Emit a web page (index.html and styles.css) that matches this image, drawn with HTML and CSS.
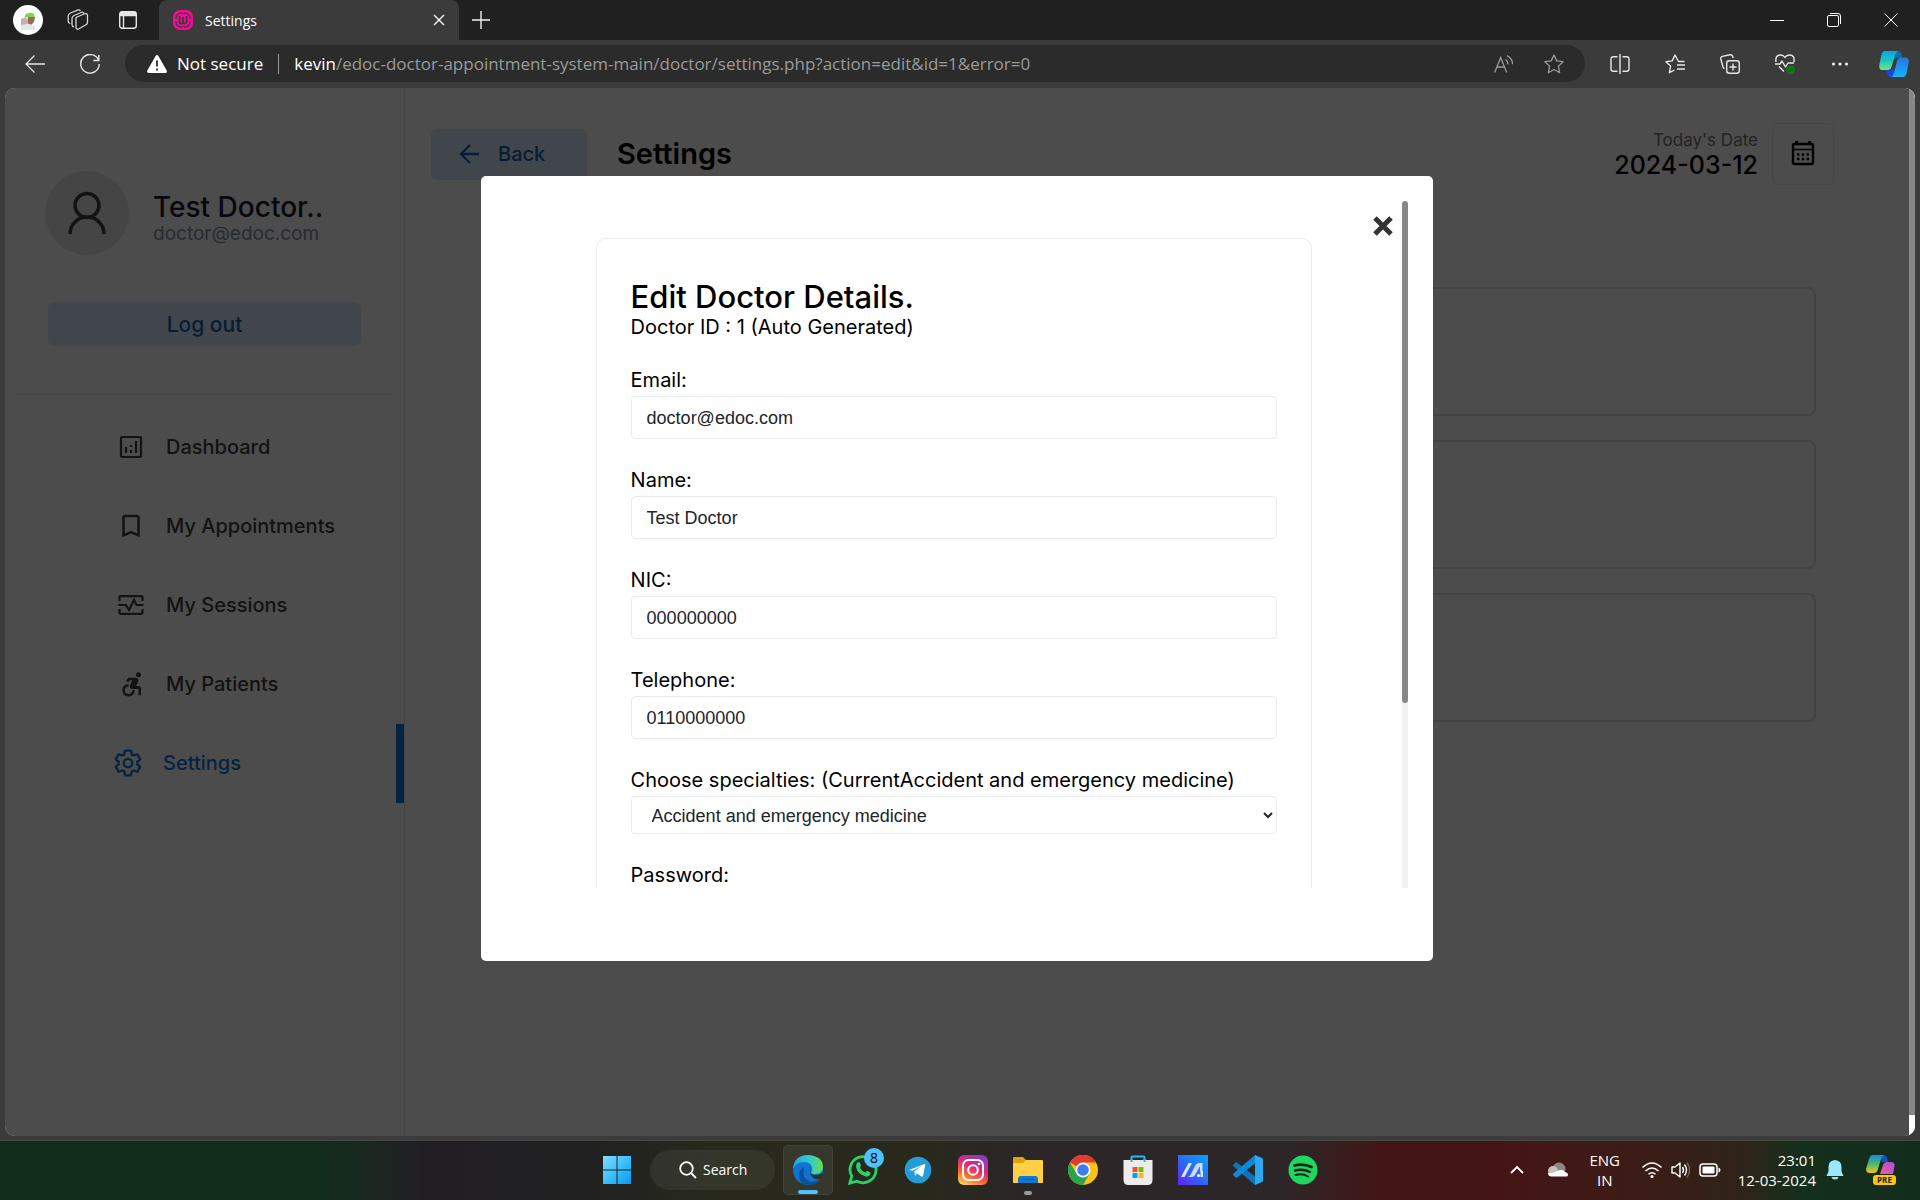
FILE: index.html
```html
<!DOCTYPE html>
<html lang="en">
<head>
<meta charset="utf-8">
<title>Settings</title>
<link rel="stylesheet" href="styles.css">
</head>
<body>
<header class="titlebar">
  <div class="titlebar-tools">
    <button class="ghost profile" aria-label="Profile"><svg width="30" height="30" viewBox="0 0 30 30"><circle cx="15" cy="15" r="15" fill="#fff"/><path d="M12 10q4-4 9-1l1 4-10-1z" fill="#7fd64a"/><path d="M15 12h7l-1 5-3 3-4-2z" fill="#9a6a58"/><path d="M8 14l5-2 2 5-1 4-6-1z" fill="#c9b3a8"/><path d="M8 20l7-1 7 2v4H8z" fill="#e3e6ea"/></svg></button>
    <button class="ghost" aria-label="Workspaces"><svg width="22" height="22" viewBox="0 0 22 22" fill="none" stroke="#d6d6d6" stroke-width="1.3" stroke-linejoin="round"><path d="M9 8.500l8-3.500q3.500-1 3.500 1.500v7q0 1.500-1.500 2.300l-7 4q-3 1-3-1.500z"/><path d="M17 4.500q-.5-2-3-1L7 6.500Q5 7.500 5 9.500v6q0 2 2 2.300M13.500 2q-1-1.600-3-.8L3.500 4Q1.200 5 1.200 7v5q0 2.200 2 2.600"/></svg></button>
    <button class="ghost" aria-label="Tab actions"><svg width="20" height="20" viewBox="0 0 20 20" fill="none" stroke="#e6e6e6" stroke-width="1.4"><rect x="1.700" y="1.700" width="16.600" height="16.600" rx="2.500"/><path d="M2 4h16" stroke-width="4.500"/><path d="M5.500 6v12"/></svg></button>
  </div>
  <div class="tab">
    <svg width="20" height="20" viewBox="0 0 20 20"><rect width="20" height="20" rx="7" fill="#f50a96"/><rect x="3" y="3" width="14" height="14" rx="5" fill="none" stroke="#3b3b3b" stroke-width="1.300"/><path d="M6.500 6v6q0 1.500 1.700 1.500T10 12V7v5q0 1.500 1.700 1.500T13.500 12V6" fill="none" stroke="#3b3b3b" stroke-width="1.800"/><path d="M0 10h4M16 10h4M10 0v3M10 17v3" stroke="#f50a96" stroke-width="2"/></svg>
    <span class="tab-title">Settings</span>
    <button class="ghost" aria-label="Close tab"><svg width="12" height="12" viewBox="0 0 12 12" stroke="#fff" stroke-width="1.400"><path d="M1 1l10 10M11 1L1 11"/></svg></button>
  </div>
  <button class="ghost new-tab" aria-label="New tab"><svg width="18" height="18" viewBox="0 0 18 18" stroke="#eee" stroke-width="1.400"><path d="M9 0v18M0 9h18"/></svg></button>
  <div class="window-controls">
    <button class="ghost" aria-label="Minimize"><svg width="14" height="14" viewBox="0 0 14 14" stroke="#fff"><path d="M0 7.500h14"/></svg></button>
    <button class="ghost" aria-label="Restore"><svg width="14" height="14" viewBox="0 0 14 14" fill="none" stroke="#fff"><rect x=".5" y="2.500" width="11" height="11" rx="1.500"/><path d="M3 .5h8q2.500 0 2.500 2.500v8"/></svg></button>
    <button class="ghost" aria-label="Close"><svg width="14" height="14" viewBox="0 0 14 14" stroke="#fff"><path d="M.5.500l13 13M13.500.500l-13 13"/></svg></button>
  </div>
</header>
<nav class="toolbar" aria-label="Browser toolbar">
  <div class="nav-buttons">
    <button class="ghost" aria-label="Back"><svg width="20" height="18" viewBox="0 0 20 18" fill="none" stroke="#e6e6e6" stroke-width="1.300"><path d="M20 9H1M9.500.500L1 9l8.500 8.500"/></svg></button>
    <button class="ghost" aria-label="Refresh"><svg width="20" height="20" viewBox="0 0 20 20" fill="none" stroke="#e6e6e6" stroke-width="1.400"><path d="M18.500 6A9.300 9.300 0 1 0 19.300 10M18.800 1v5.500h-5.500"/></svg></button>
  </div>
  <div class="address">
    <svg width="20" height="18" viewBox="0 0 20 18"><path d="M8.700.800q1.300-1.400 2.600 0l8.500 15q.3 2-1.300 2.200H1.500Q-.2 17.800.2 15.800z" fill="#fff"/><path d="M10 5.500v6M10 13.500v2" stroke="#2b2b2b" stroke-width="1.800"/></svg>
    <span class="not-secure">Not secure</span>
    <span class="address-divider"></span>
    <span class="url"><b>kevin</b>/edoc-doctor-appointment-system-main/doctor/settings.php?action=edit&amp;id=1&amp;error=0</span>
    <button class="ghost" aria-label="Read aloud"><svg width="20" height="18" viewBox="0 0 20 18" fill="none" stroke="#9a9a9a" stroke-width="1.300"><path d="M.7 17.500L6.700 2.500l6 15M2.800 12h7.700M11.500 4.500q2.500 1.500 2.500 5M13 .7q5.500 2.800 5.500 8.500"/></svg></button>
    <button class="ghost" aria-label="Add to favorites"><svg width="20" height="20" viewBox="0 0 20 20" fill="none" stroke="#9a9a9a" stroke-width="1.300" stroke-linejoin="round"><path d="M10 1l2.800 5.900 6.300.8-4.700 4.400 1.200 6.600L10 15.500l-5.600 3.200 1.200-6.600L.9 7.700l6.300-.8z"/></svg></button>
  </div>
  <div class="toolbar-actions">
    <button class="ghost" aria-label="Split screen"><svg width="20" height="20" viewBox="0 0 20 20" fill="none" stroke="#e6e6e6" stroke-width="1.400"><path d="M7.500 2.700h-4Q1 2.700 1 5v10q0 2.300 2.500 2.300h4M12.500 2.700h4Q19 2.700 19 5v10q0 2.300-2.500 2.300h-4M10 0v20"/></svg></button>
    <button class="ghost" aria-label="Favorites"><svg width="20" height="20" viewBox="0 0 20 20" fill="none" stroke="#e6e6e6" stroke-width="1.400" stroke-linejoin="round"><path d="M19.500 7.500h-6L10 1 7.200 6.900.9 7.700l4.700 4.400-1.200 6.600L9.500 16M12 11h8M12 15h8"/></svg></button>
    <button class="ghost" aria-label="Collections"><svg width="20" height="20" viewBox="0 0 20 20" fill="none" stroke="#e6e6e6" stroke-width="1.400" stroke-linejoin="round"><rect x="6.700" y="6.700" width="12.600" height="12.600" rx="2.500"/><path d="M13 9.500v7M9.500 13h7M4.500 14.500Q3.500 14.500 3 13L.8 5Q.4 3 2.300 2.400L10 .8q2-.4 2.700 1.500l.6 1.700"/></svg></button>
    <button class="ghost" aria-label="Browser essentials"><svg width="20" height="20" viewBox="0 0 20 20" fill="none" stroke="#e6e6e6" stroke-width="1.400" stroke-linejoin="round"><path d="M1 8Q0 1 5.500 1 8.500 1 10 3.500 11.500 1 14.500 1 20 1 19 8M0 10h5l2-3 3.500 6 2.500-4h6M4 12.500l5 5"/><circle cx="15.500" cy="16" r="4.300" fill="#107c10" stroke="none"/><path d="M13.500 16l1.500 1.500 2.700-2.700" stroke="#063b06" stroke-width="1"/></svg></button>
    <button class="ghost" aria-label="More"><svg width="20" height="20" viewBox="0 0 20 20" fill="#fff"><circle cx="3.500" cy="10" r="1.500"/><circle cx="10" cy="10" r="1.500"/><circle cx="16.500" cy="10" r="1.500"/></svg></button>
    <button class="ghost copilot" aria-label="Copilot"><svg width="30" height="28" viewBox="0 0 30 28"><defs><linearGradient id="cpA" x1="0" y1="0" x2="0" y2="1"><stop offset="0" stop-color="#08a5e8"/><stop offset=".5" stop-color="#1cc4c0"/><stop offset="1" stop-color="#7be08a"/></linearGradient><linearGradient id="cpB" x1="0" y1="0" x2="0" y2="1"><stop offset="0" stop-color="#2a72e0"/><stop offset="1" stop-color="#16b4fb"/></linearGradient></defs><path d="M15 1h4q2.500 0 3.500 3l1 4h-5q-3 0-4 3z" fill="#0b6fa8"/><path d="M15 27h-4q-2.500 0-3-3l-1-4h5q3 0 4-3z" fill="#1c46d8"/><path d="M6 1h13q-2 1-3 4l-3.500 12Q11.500 20 9 20H4q-4.500 0-3.700-5L2.500 4.500Q3.500 1 6 1z" fill="url(#cpA)"/><path d="M24 27H12q2-1 3-4l3-12q1-3.500 4-3.500h4q4.500 0 3.700 5L27.500 23.500Q26.500 27 24 27z" fill="url(#cpB)"/></svg></button>
  </div>
</nav>

<main class="viewport">
  <div class="page">
    <aside class="sidebar">
      <div class="user">
        <div class="avatar"><svg width="38" height="44" viewBox="0 0 38 44" fill="none" stroke="#404040" stroke-width="3.500"><circle cx="19" cy="14.500" r="12"/><path d="M2 43a17 17 0 0 1 34 0"/></svg></div>
        <div class="user-text"><div class="user-name">Test Doctor..</div><div class="user-mail">doctor@edoc.com</div></div>
      </div>
      <button class="soft logout">Log out</button>
      <hr class="rule">
      <nav class="menu">
        <a href="#"><svg width="30" height="30" viewBox="0 0 30 30" fill="none" stroke="currentColor"><rect x="5" y="5" width="20" height="20" rx="1" stroke-width="2.200"/><path d="M10 15v6M15 18v3M15 13v2M20 9v12" stroke-width="2.200"/></svg>Dashboard</a>
        <a href="#"><svg width="30" height="30" viewBox="0 0 24 24" fill="currentColor"><path d="M17 3H7c-1.100 0-2 .9-2 2v16l7-3 7 3V5c0-1.100-.9-2-2-2zm0 15l-5-2.180L7 18V5h10v13z"/></svg>My Appointments</a>
        <a href="#"><svg width="30" height="30" viewBox="0 0 30 30" fill="none" stroke="currentColor" stroke-width="2.200"><path d="M3.500 11V7.500Q3.500 6.200 5 6.200h20q1.500 0 1.500 1.300V11M3.500 19v3.500q0 1.300 1.500 1.300h20q1.500 0 1.500-1.300V19M2.500 15H10l3 5 5-10 2.500 5h7"/></svg>My Sessions</a>
        <a href="#"><svg width="30" height="30" viewBox="0 0 24 24" fill="currentColor"><circle cx="18" cy="4.540" r="2"/><path d="M15 17h-2c0 1.650-1.350 3-3 3s-3-1.350-3-3 1.350-3 3-3v-2c-2.760 0-5 2.240-5 5s2.240 5 5 5 5-2.240 5-5zm3-3.500h-1.860l1.670-3.670C18.420 8.500 17.440 7 15.960 7h-5.200c-.81 0-1.540.47-1.870 1.200L8.220 10l1.920.53.650-1.530H13l-1.830 4.100c-.6 1.330.39 2.900 1.850 2.900H18v5h2v-5.500c0-1.100-.9-2-2-2z"/></svg>My Patients</a>
        <a href="#" class="active"><svg width="30" height="30" viewBox="0 0 24 24" fill="none" stroke="currentColor" stroke-width="1.800"><path d="M19.430 12.980c.04-.32.07-.64.070-.98 0-.34-.03-.66-.07-.98l2.110-1.650c.19-.15.240-.42.120-.64l-2-3.460c-.09-.16-.26-.25-.44-.25-.06 0-.12.010-.17.030l-2.490 1c-.52-.4-1.080-.73-1.690-.98l-.38-2.650C14.460 2.180 14.250 2 14 2h-4c-.25 0-.46.180-.49.420l-.38 2.650c-.61.250-1.170.59-1.690.98l-2.490-1c-.06-.02-.12-.03-.18-.03-.17 0-.34.090-.43.250l-2 3.460c-.13.220-.07.490.12.640l2.110 1.650c-.04.320-.07.650-.07.980 0 .33.030.66.070.98l-2.110 1.650c-.19.150-.24.420-.12.640l2 3.460c.09.160.26.250.44.250.06 0 .12-.01.170-.03l2.490-1c.52.4 1.080.73 1.690.98l.38 2.650c.03.240.24.420.49.420h4c.25 0 .46-.18.490-.42l.38-2.650c.61-.25 1.170-.59 1.690-.98l2.490 1c.06.020.12.030.18.030.17 0 .34-.09.430-.25l2-3.460c.12-.22.070-.49-.12-.64z"/><circle cx="12" cy="12" r="3.400"/></svg>Settings</a>
      </nav>
    </aside>
    <section class="content">
      <div class="content-head">
        <button class="soft back"><svg width="20" height="20" viewBox="0 0 20 20" fill="none" stroke="#1b62b3" stroke-width="2.300"><path d="M20 10H1.500M11 1l-9 9 9 9"/></svg>Back</button>
        <h1>Settings</h1>
        <div class="today"><div class="today-label">Today's Date</div><div class="today-value">2024-03-12</div></div>
        <button class="calendar" aria-label="Calendar"><svg width="24" height="28" viewBox="0 0 24 28" fill="none" stroke="#000"><rect x="2" y="4" width="20" height="20" rx="1.500" stroke-width="2.400"/><path d="M5.500 1v3M18.500 1v3" stroke-width="3"/><path d="M2 9.500h20" stroke-width="1.600"/><path d="M6 14.500h12M6 19h12" stroke-width="2.400" stroke-dasharray="2.400"/></svg></button>
      </div>
      <div class="options"><div class="option"></div><div class="option"></div><div class="option"></div></div>
    </section>
  </div>
  <div class="rail page-rail"><div class="thumb"></div></div>
  <div class="overlay">
    <div class="modal" role="dialog" aria-label="Edit Doctor Details">
      <div class="modal-scroll">
        <button class="close" aria-label="Close dialog"><svg width="20" height="20" viewBox="0 0 20 20" stroke="#333" stroke-width="5"><path d="M2 2l16 16M18 2L2 18"/></svg></button>
        <form class="card">
          <h2>Edit Doctor Details.</h2>
          <p class="doctor-id">Doctor ID : 1 (Auto Generated)</p>
          <div class="field"><label for="email">Email:</label><input id="email" type="text" value="doctor@edoc.com"></div>
          <div class="field"><label for="name">Name:</label><input id="name" type="text" value="Test Doctor"></div>
          <div class="field"><label for="nic">NIC:</label><input id="nic" type="text" value="000000000"></div>
          <div class="field"><label for="tel">Telephone:</label><input id="tel" type="text" value="0110000000"></div>
          <div class="field"><label for="spec">Choose specialties: (CurrentAccident and emergency medicine)</label><select id="spec"><option>Accident and emergency medicine</option></select></div>
          <div class="field"><label for="password">Password:</label><input id="password" type="password"></div>
        </form>
      </div>
      <div class="rail modal-rail"><div class="thumb"></div></div>
    </div>
  </div>
</main>

<footer class="taskbar">
  <div class="apps">
    <button class="app" aria-label="Start"><svg width="30" height="30" viewBox="0 0 30 30"><defs><linearGradient id="win" x1="0" y1="0" x2="1" y2="1"><stop offset="0" stop-color="#7fdcff"/><stop offset=".5" stop-color="#3cc0fb"/><stop offset="1" stop-color="#0a98f5"/></linearGradient></defs><path fill="url(#win)" d="M1 1h13.500v13.500H1zM15.500 1H29v13.500H15.500zM1 15.500h13.500V29H1zM15.500 15.500H29V29H15.500z"/></svg></button>
    <button class="search"><svg width="18" height="18" viewBox="0 0 18 18" fill="none" stroke="#fff" stroke-width="1.800"><circle cx="7.500" cy="7.500" r="6.300"/><path d="M12 12l5 5"/></svg>Search</button>
    <button class="app current" aria-label="Edge"><svg width="30" height="30" viewBox="0 0 30 30"><defs><linearGradient id="edA" x1="0" y1=".5" x2="1" y2=".5"><stop offset="0" stop-color="#2a9fe0"/><stop offset=".5" stop-color="#30c6d6"/><stop offset="1" stop-color="#64e054"/></linearGradient></defs><circle cx="15" cy="15" r="15" fill="#0f74d0"/><path d="M11 15Q9 21 14 25t12-1Q22 30 15 30 6 30 6 20q0-5 5-8z" fill="#0d4f9f"/><path d="M0 14Q1 0 15 0q15 1 15 12 0 7-8 7-4 0-4-2 2-2 1-5-2-5-8-5Q3 7 0 14z" fill="url(#edA)"/><path d="M18.500 16q-1 1-.5 2 1 2 5 2 4 0 6.500-2l.5 3-2 3q-4 1-7.500-1-4-3-3-7 .5-1 1-0z" fill="#30312a"/></svg><span class="running"></span></button>
    <button class="app" aria-label="WhatsApp"><svg width="30" height="30" viewBox="0 0 30 30" fill="none"><path d="M1.800 28.200l2-7A13 13 0 1 1 9 26.200z" stroke="#25d366" stroke-width="2.800"/><path d="M9 8q2-2 3 0l1 2.500-1.200 2q2 4 5.700 5l1.500-1.700 3.500 1.700q0 4-4 4.200Q10 20 8 12q0-2.500 1-4z" fill="#25d366"/></svg><span class="badge">8</span></button>
    <button class="app" aria-label="Telegram"><svg width="28" height="28" viewBox="0 0 28 28"><circle cx="14" cy="14" r="13.300" fill="#239cd8"/><path d="M5 14l15.500-6q1-.2.800 1L19 20q-.5 1-1.500.4L10 15.500l8-6-9.500 5.200z" fill="#fff"/><path d="M10 15l1 5 2.500-2.500z" fill="#c8dae8"/></svg></button>
    <button class="app" aria-label="Instagram"><svg width="30" height="30" viewBox="0 0 30 30" fill="none"><defs><linearGradient id="ig" x1=".2" y1="1" x2=".7" y2="0"><stop offset="0" stop-color="#ffd15a"/><stop offset=".3" stop-color="#fb6a2f"/><stop offset=".6" stop-color="#dd2a7b"/><stop offset="1" stop-color="#8a3ac8"/></linearGradient></defs><rect width="30" height="30" rx="6" fill="url(#ig)"/><rect x="5" y="5" width="20" height="20" rx="5.500" stroke="#fff" stroke-width="2"/><circle cx="15" cy="15" r="4.800" stroke="#fff" stroke-width="2"/><circle cx="21" cy="9" r="1.300" fill="#fff"/></svg></button>
    <button class="app" aria-label="File Explorer"><svg width="30" height="30" viewBox="0 0 30 30"><path d="M0 3q0-1 1-1h9l3 3v5H0z" fill="#e0a010"/><path d="M0 8h10l3-3h16q1 0 1 1v22H0z" fill="#ffcf45"/><path d="M5 28v-4q0-3 3-3h14q3 0 3 3v4z" fill="#0f78d0"/><path d="M9 24.500h12" stroke="#0a4f94"/></svg><span class="running idle"></span></button>
    <button class="app" aria-label="Chrome"><svg width="30" height="30" viewBox="0 0 30 30"><circle cx="15" cy="15" r="15" fill="#fbc116"/><path d="M15 15L2 7.500A15 15 0 0 1 28 7.500H15z" fill="#e33b2e"/><path d="M2 7.500A15 15 0 0 0 15 30l6.500-11.200L15 15 8.500 18.700z" fill="#2ba24c"/><circle cx="15" cy="15" r="7.500" fill="#fff"/><circle cx="15" cy="15" r="5.800" fill="#3b7cf0"/></svg></button>
    <button class="app" aria-label="Microsoft Store"><svg width="30" height="30" viewBox="0 0 30 30"><path d="M8.500 7V2.500q0-1 1-1h11q1 0 1 1V7" fill="none" stroke="#30b4ec" stroke-width="2"/><path d="M.5 5h29v20q0 5-5 5h-19q-5 0-5-5z" fill="#ececec"/><path d="M8.500 4v3M21.500 4v3" stroke="#30b4ec" stroke-width="2"/><path d="M9.500 12h5v5h-5z" fill="#f25022"/><path d="M15.500 12h5v5h-5z" fill="#7fba00"/><path d="M9.500 18h5v5h-5z" fill="#00a4ef"/><path d="M15.500 18h5v5h-5z" fill="#ffb900"/></svg></button>
    <button class="app" aria-label="MyASUS"><svg width="30" height="30" viewBox="0 0 30 30"><defs><linearGradient id="as" x1="0" y1="1" x2="1" y2="0"><stop offset="0" stop-color="#6320f5"/><stop offset=".5" stop-color="#2a6cf8"/><stop offset="1" stop-color="#05a6fa"/></linearGradient></defs><path fill="url(#as)" d="M0 0h30v30H0z"/><path d="M3 22L10.500 8H14L6.500 22z" fill="#dce6ff"/><path d="M9 22c2 0 3-1 4-3l4-8c1-2 2-3 5-3h2.500v8.500H22V11l-5 9c-1 1.500-2 2-4 2z" fill="#cbdcff"/><circle cx="20.500" cy="20.500" r="1.500" fill="#fff"/><path d="M22.500 16H25v6h-2.500z" fill="#dce6ff"/></svg></button>
    <button class="app" aria-label="Visual Studio Code"><svg width="30" height="30" viewBox="0 0 30 30"><path d="M.5 9.500l2-2q.7-.5 1.500 0L22 21.500V30L.5 11.500q-.8-1 0-2z" fill="#1272b8"/><path d="M.5 20.500l2 2q.7.500 1.500 0L22 8.500V0L.5 18.500q-.8 1 0 2z" fill="#0c8ad6"/><path d="M22 0l7 3q1 .5 1 1.500v21q0 1-1 1.500l-7 3z" fill="#2aa9f3"/></svg></button>
    <button class="app" aria-label="Spotify"><svg width="30" height="30" viewBox="0 0 30 30" fill="none" stroke="#10240f" stroke-linecap="round"><circle cx="15" cy="15" r="14.500" fill="#1ed760" stroke="none"/><path d="M6.500 10.500q9-2.500 17 1.500" stroke-width="2.800"/><path d="M7 15.500q8-2.200 15 1.500" stroke-width="2.400"/><path d="M7.500 20q7-1.800 12.500 1.500" stroke-width="2"/></svg></button>
  </div>
  <div class="tray">
    <button class="ghost tray-chevron" aria-label="Show hidden icons"><svg width="14" height="9" viewBox="0 0 14 9" fill="none" stroke="#fff" stroke-width="1.800"><path d="M1 8l6-6 6 6"/></svg></button>
    <svg width="22" height="16" viewBox="0 0 22 16"><circle cx="12" cy="7" r="6.500" fill="#8f8582"/><circle cx="6" cy="9" r="5" fill="#c8c0bd"/><path d="M4 14.500q-3-.5-3-3.500h4l8-3q4-.5 5 2 3 .5 3 3 0 1.500-2 1.500z" fill="#fff"/></svg>
    <div class="lang">ENG<br>IN</div>
    <div class="status">
      <svg width="22" height="18" viewBox="0 0 22 18" fill="none" stroke="#fff" stroke-width="1.500"><path d="M1.500 6.500q9.500-9 19 0M4.500 10q6.500-6 13 0M7.500 13.200q3.500-3 7 0"/><circle cx="11" cy="15.500" r="1.600" fill="#fff" stroke="none"/></svg>
      <svg width="20" height="18" viewBox="0 0 20 18" fill="none" stroke="#fff" stroke-width="1.400" stroke-linejoin="round"><path d="M1 6v6h3l5 4V2L4 6zM11.500 6q2 3 0 6M13.500 3.500q4 5.500 0 11"/><path d="M16 1.500q5 7.500 0 15" stroke="#775b52"/></svg>
      <svg width="22" height="14" viewBox="0 0 22 14"><rect x="1" y="1" width="17" height="12" rx="3" fill="none" stroke="#fff" stroke-width="1.500"/><rect x="3.500" y="3.500" width="12" height="7" rx="1" fill="#fff"/><path d="M19.500 4.500q2 .5 2 2.500t-2 2.500z" fill="#fff"/></svg>
    </div>
    <div class="clock">23:01<br>12-03-2024</div>
    <svg width="18" height="20" viewBox="0 0 18 20" fill="#9be8fd"><path d="M9 0q6.500.5 6.500 7v4.500L17.500 16H.5l2-4.500V7Q2.500.500 9 0zM5.500 17h7Q12 19.500 9 19.500T5.500 17z"/></svg>
    <button class="ghost tray-copilot" aria-label="Copilot preview"><svg width="30" height="20" viewBox="0 0 30 20"><defs><linearGradient id="ctA" x1="0" y1="0" x2="0" y2="1"><stop offset="0" stop-color="#148be8"/><stop offset=".5" stop-color="#4bb86a"/><stop offset="1" stop-color="#f5c416"/></linearGradient><linearGradient id="ctB" x1="1" y1="0" x2="0" y2="1"><stop offset="0" stop-color="#a050f0"/><stop offset="1" stop-color="#f55a8c"/></linearGradient></defs><path d="M14 0h4q3 0 4 7h-6z" fill="#1450c8"/><path d="M7 0h11q-2 1-3 4l-3 10q-1 4-4 4H4q-4 0-4-4L3 4q1-4 4-4z" fill="url(#ctA)"/><path d="M21 7h4q4 0 3.500 4L27 19H14l3-9q1-3 4-3z" fill="url(#ctB)"/></svg><span class="pre">PRE</span></button>
  </div>
</footer>
</body>
</html>
```
FILE: styles.css
```css
* { box-sizing: border-box; }
html, body { height: 100%; }
body {
  margin: 0;
  display: flex;
  flex-direction: column;
  background: #3b3b3b;
  font-family: Inter, "Liberation Sans", sans-serif;
  overflow: hidden;
}
button { font: inherit; border: 0; margin: 0; padding: 0; cursor: pointer; }
svg { display: block; flex: none; }
h1, h2, p { margin: 0; }
.ghost {
  background: none;
  color: inherit;
  display: flex;
  align-items: center;
  justify-content: center;
}

/* Browser window */
.titlebar, .toolbar, .taskbar {
  font-family: "Open Sans", "Noto Sans", sans-serif;
  color: #fff;
}
.titlebar { height: 40px; display: flex; background: #202020; flex: none; }
.titlebar-tools { display: flex; padding-left: 3px; width: 159px; }
.titlebar-tools .ghost { width: 50px; }
.tab {
  width: 300px;
  display: flex;
  align-items: center;
  gap: 12px;
  padding: 0 14px;
  background: #3b3b3b;
  border-radius: 8px 8px 0 0;
  font-size: 14px;
}
.tab-title { flex: 1; }
.new-tab { width: 44px; }
.window-controls { margin-left: auto; display: flex; padding-right: 1px; }
.window-controls .ghost { width: 57px; }

.toolbar { height: 48px; display: flex; flex: none; padding-bottom: 1px; align-items: center; }
.nav-buttons { display: flex; width: 125px; padding-left: 7px; }
.nav-buttons .ghost { width: 55px; height: 40px; }
.address {
  flex: 1;
  height: 37px;
  display: flex;
  align-items: center;
  padding: 0 6px 0 22px;
  border-radius: 19px;
  background: #2b2b2b;
  font-size: 17px;
}
.address .ghost { width: 50px; height: 37px; }
.not-secure { margin-left: 10px; }
.address-divider { width: 1px; height: 20px; margin: 0 15px; background: #9a9a9a; }
.url { flex: 1; color: #9a9a9a; white-space: nowrap; }
.url b { color: #fff; font-weight: 400; }
.toolbar-actions { display: flex; padding-left: 7px; }
.toolbar-actions .ghost { width: 55px; height: 40px; }
.toolbar-actions .copilot { width: 53px; }

/* Page */
.viewport {
  flex: 1;
  min-height: 0;
  margin: 0 5px 4px;
  display: flex;
  position: relative;
  border-radius: 10px;
  overflow: hidden;
  background: #fff;
}
.page { flex: 1; display: flex; }
.rail { width: 6px; flex: none; background: #f1f1f1; }
.rail .thumb { background: #888; }
.page-rail { background: #fff; }
.page-rail .thumb { height: 98%; }

.sidebar { width: 400px; border-right: 1px solid #ebebeb; padding-top: 83px; }
.user { display: flex; align-items: center; gap: 24px; padding-left: 40px; }
.user-text { padding-top: 10px; }
.avatar {
  width: 84px;
  height: 84px;
  border-radius: 50%;
  background: #e6e6e6;
  display: flex;
  align-items: center;
  justify-content: center;
}
.user-name { font-size: 28px; line-height: 32px; font-weight: 500; color: #161c2d; }
.user-mail { font-size: 19px; line-height: 22px; color: #8492a6; }
.soft { background: #d8ebfa; color: #1b62b3; border-radius: 6px; font-size: 20px; font-weight: 500; }
.logout { display: block; width: 313px; height: 44px; margin: 47px 0 48px 43px; font-size: 21px; }
.rule { border: 0; height: 1px; margin: 0 12px 13px 13px; background: #ebebeb; }
.menu a {
  display: flex;
  align-items: center;
  gap: 20px;
  height: 79px;
  padding: 0 0 2px 111px;
  font-size: 20px;
  font-weight: 500;
  color: #404040;
  text-decoration: none;
}
.menu a.active { padding-left: 108px; color: #0a76d8; border-right: 8px solid #0a76d8; }

.content { flex: 1; padding: 35px 75px 0 26px; }
.content-head { display: flex; align-items: center; }
.back { display: flex; align-items: center; gap: 19px; width: 156px; height: 51px; padding-left: 28px; }
h1 { flex: 1; margin-left: 30px; font-size: 29px; line-height: 34px; font-weight: 600; }
.today { text-align: right; margin-right: 14px; }
.today-label { font-size: 17px; line-height: 22px; color: #777; }
.today-value { font-size: 25px; line-height: 28px; font-weight: 500; }
.calendar {
  width: 62px;
  height: 62px;
  display: flex;
  align-items: center;
  justify-content: center;
  border: 1px solid #ebebeb;
  border-radius: 6px;
  background: #fdfdfd;
}
.options { display: grid; gap: 24px; margin: 102px 18px 0 60px; }
.option { height: 129px; border: 2px solid #dedede; border-radius: 8px; }

/* Edit dialog */
.overlay { position: absolute; inset: 0 6px 0 0; background: rgba(0, 0, 0, 0.7); padding-top: 88px; }
.modal {
  width: 50%;
  margin: 0 auto;
  padding: 25px 25px 73px;
  display: flex;
  border-radius: 5px;
  background: #fff;
}
.modal-scroll {
  flex: 1;
  height: calc(100vh - 513px);
  padding-top: 37px;
  overflow: hidden;
  position: relative;
}
.modal-rail .thumb { height: 73%; border-radius: 3px; }
.close {
  position: absolute;
  top: 10px;
  right: 4px;
  width: 30px;
  height: 30px;
  display: flex;
  align-items: center;
  justify-content: center;
  background: none;
}
.card {
  width: 80%;
  margin: 0 auto;
  padding: 40px 34px;
  border: 1px solid #ebebeb;
  border-radius: 10px;
  font-size: 20px;
  line-height: 24px;
}
h2 { font-size: 31px; line-height: 36px; font-weight: 500; }
.field { display: flex; flex-direction: column; gap: 4px; margin-top: 29px; }
.field input, .field select {
  width: 100%;
  height: 43px;
  padding: 2px 15px 0;
  border: 1px solid #e9ecef;
  border-radius: 4px;
  background: #fff;
  color: #212529;
  font-family: "Liberation Sans", Arial, sans-serif;
  font-size: 18px;
}
.field select { height: 38px; padding: 2px 0 0 16px; }

/* Taskbar */
.taskbar {
  height: 60px;
  flex: none;
  display: grid;
  grid-template-columns: 1fr auto 1fr;
  align-items: center;
  padding-bottom: 2px;
  border-top: 1px solid #454745;
  background: linear-gradient(90deg, #132d1d 0%, #132d1d 17%, #221f24 22%, #212121 31%, #28291c 37%, #28291c 48%, #2c2628 54%, #2c2628 67%, #441515 72%, #451515 78%, #3a1d16 86%, #2e2419 91%, #13301c 94%, #132d1d 100%);
}
.apps { grid-column: 2; display: flex; align-items: center; gap: 5px; }
.app {
  width: 50px;
  height: 50px;
  display: flex;
  align-items: center;
  justify-content: center;
  position: relative;
  border-radius: 5px;
  background: none;
}
.app.current { background: #ffffff12; border: 1px solid #ffffff10; }
.running {
  position: absolute;
  bottom: 0;
  left: 50%;
  width: 20px;
  height: 4px;
  margin-left: -10px;
  border-radius: 2px;
  background: #4cc2ff;
}
.running.idle { width: 8px; margin-left: -4px; background: #9a9a9a; }
.badge {
  position: absolute;
  top: 3px;
  right: 4px;
  width: 20px;
  height: 20px;
  border-radius: 50%;
  background: #4cc2ff;
  color: #000;
  font-size: 14px;
  line-height: 20px;
  text-align: center;
}
.search {
  width: 125px;
  height: 40px;
  margin: 0 3px;
  display: flex;
  align-items: center;
  gap: 6px;
  padding-left: 29px;
  border-radius: 20px;
  background: #ffffff10;
  color: #fff;
  font-size: 14px;
}
.tray {
  display: flex;
  align-items: center;
  justify-content: flex-end;
  padding-right: 24px;
  font-size: 15px;
  line-height: 20px;
}
.tray-chevron { width: 40px; height: 40px; margin-right: 10px; }
.lang { width: 44px; margin: 0 14px; text-align: center; }
.status { display: flex; align-items: center; gap: 8px; margin-right: 17px; }
.clock { text-align: right; margin-right: 10px; }
.tray-copilot { position: relative; margin-left: 22px; height: 30px; align-items: flex-start; }
.pre {
  position: absolute;
  right: 0;
  bottom: 0;
  width: 23px;
  border-radius: 3px;
  background: #ffc40c;
  color: #222;
  font-size: 8px;
  line-height: 10px;
  font-weight: 700;
}
```
